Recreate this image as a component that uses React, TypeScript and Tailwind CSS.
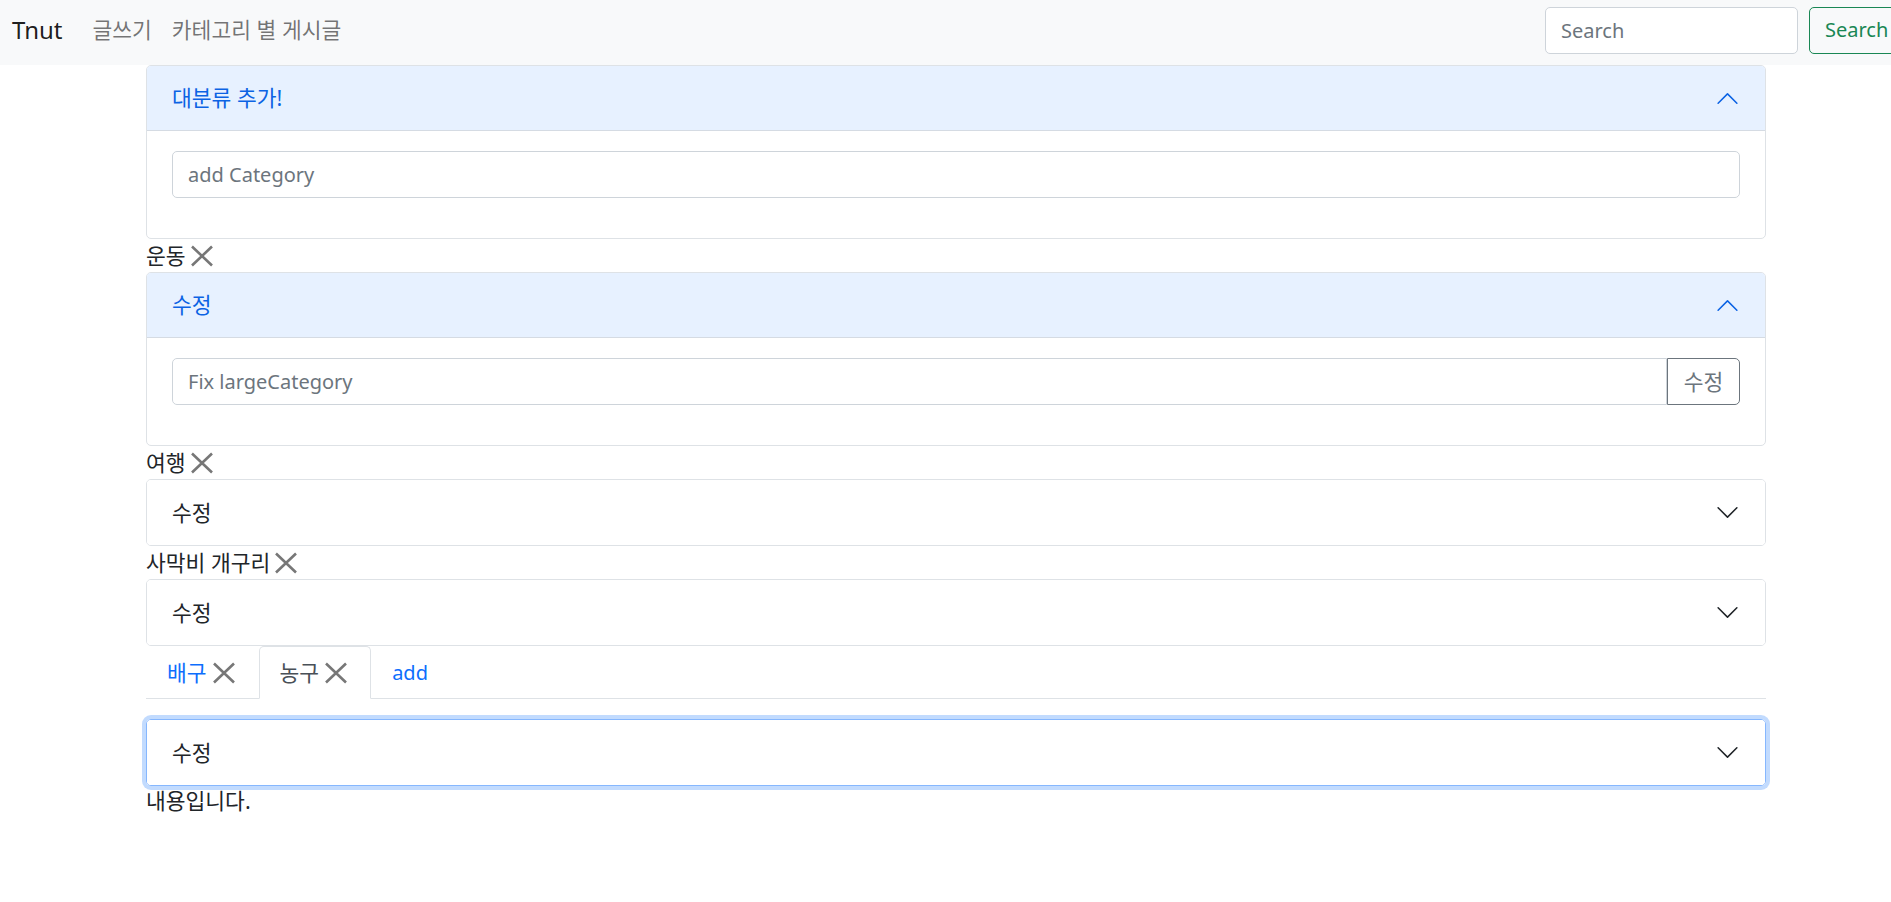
import type { ReactNode } from 'react';

const FONT = "font-['Noto_Sans','Noto_Sans_CJK_KR',sans-serif]";
// Hangul in Noto Sans CJK runs a little small next to the reference's glyphs.
const KO = 'text-[21.5px]';

// Bootstrap's accordion chevron, flipped and tinted when the panel is open.
function Chevron({ open }: { open: boolean }) {
  return (
    <svg
      viewBox="0 0 16 16"
      className={`h-[25px] w-[25px] shrink-0 ${open ? 'rotate-180' : ''}`}
      fill={open ? '#0c63e4' : '#212529'}
      aria-hidden="true"
    >
      <path
        fillRule="evenodd"
        d="M1.646 4.646a.5.5 0 0 1 .708 0L8 10.293l5.646-5.647a.5.5 0 0 1 .708.708l-6 6a.5.5 0 0 1-.708 0l-6-6a.5.5 0 0 1 0-.708z"
      />
    </svg>
  );
}

function XIcon({ className = '' }: { className?: string }) {
  return (
    <svg viewBox="0 0 28 28" className={`h-[28px] w-[28px] shrink-0 ${className}`} aria-hidden="true">
      <path d="M4 4.5L24 23.5M24 4.5L4 23.5" stroke="#777777" strokeWidth="2.6" fill="none" />
    </svg>
  );
}

function CategoryLabel({ name }: { name: string }) {
  return (
    <div className="flex h-[33px] items-center">
      <span className={KO}>{name}</span>
      <XIcon className="ml-[2px]" />
    </div>
  );
}

function AccordionCard({
  title,
  open = false,
  focused = false,
  children,
}: {
  title: string;
  open?: boolean;
  focused?: boolean;
  children?: ReactNode;
}) {
  return (
    <div
      className={`overflow-hidden rounded-[5px] border ${
        focused ? 'border-[#86b7fe] shadow-[0_0_0_4px_rgba(13,110,253,0.25)]' : 'border-[#dee2e6]'
      }`}
    >
      {open ? (
        <div className="flex h-[65px] items-center justify-between border-b border-[#d5dbe3] bg-[#e7f1ff] px-[25px] text-[#0c63e4]">
          <span className={KO}>{title}</span>
          <Chevron open />
        </div>
      ) : (
        <div className="flex h-[65px] items-center justify-between bg-white px-[25px]">
          <span className={KO}>{title}</span>
          <Chevron open={false} />
        </div>
      )}
      {open && <div className="px-[25px] pt-[20px] pb-[20px]">{children}</div>}
    </div>
  );
}

export default function App() {
  return (
    <div className={`min-h-[902px] overflow-hidden bg-white text-[20px] leading-[30px] text-[#212529] ${FONT}`}>
      <nav className="flex h-[65px] items-center overflow-hidden bg-[#f8f9fa] pb-[5px] pl-[12px]">
        <span className="mr-[20px] text-[24px] leading-[36px] text-black/90">Tnut</span>
        <a className={`px-[10px] text-black/55 ${KO}`}>글쓰기</a>
        <a className={`px-[10px] text-black/55 ${KO}`}>카테고리 별 게시글</a>
        <form className="mr-[-16px] ml-auto flex shrink-0 gap-[11px]">
          <input
            placeholder="Search"
            className="h-[47px] w-[253px] rounded-[5px] border border-[#ced4da] bg-white px-[15px] placeholder:text-[#6c757d] outline-none"
          />
          <button
            type="button"
            className="h-[47px] w-[98px] rounded-[5px] border border-[#198754] px-[15px] text-left text-[#198754]"
          >
            Search
          </button>
        </form>
      </nav>

      <div className="ml-[146px] w-[1620px]">
        <AccordionCard title="대분류 추가!" open>
          <input
            placeholder="add Category"
            className="mb-[20px] h-[47px] w-full rounded-[5px] border border-[#ced4da] px-[15px] placeholder:text-[#6c757d] outline-none"
          />
        </AccordionCard>

        <CategoryLabel name="운동" />
        <AccordionCard title="수정" open>
          <div className="mb-[20px] flex h-[47px]">
            <input
              placeholder="Fix largeCategory"
              className="h-full flex-1 rounded-l-[5px] border border-[#ced4da] px-[15px] placeholder:text-[#6c757d] outline-none"
            />
            <button
              type="button"
              className={`h-full w-[73px] rounded-r-[5px] border border-[#6c757d] text-[#6c757d] ${KO}`}
            >
              수정
            </button>
          </div>
        </AccordionCard>

        <CategoryLabel name="여행" />
        <AccordionCard title="수정" />

        <CategoryLabel name="사막비 개구리" />
        <AccordionCard title="수정" />

        <div className="flex border-b border-[#dee2e6]">
          <div className="-mb-px flex h-[53px] items-center border border-transparent px-[20px] text-[#0d6efd]">
            <span className={KO}>배구</span>
            <XIcon className="ml-[3px]" />
          </div>
          <div className="-mb-px flex h-[53px] items-center rounded-t-[5px] border border-[#dee2e6] border-b-white bg-white px-[20px] text-[#495057]">
            <span className={KO}>농구</span>
            <XIcon className="ml-[3px]" />
          </div>
          <div className="-mb-px flex h-[53px] items-center border border-transparent px-[20px] text-[#0d6efd]">
            add
          </div>
        </div>

        <div className="mt-[20px]">
          <AccordionCard title="수정" focused />
        </div>
        <p className={KO}>내용입니다.</p>
      </div>
    </div>
  );
}
